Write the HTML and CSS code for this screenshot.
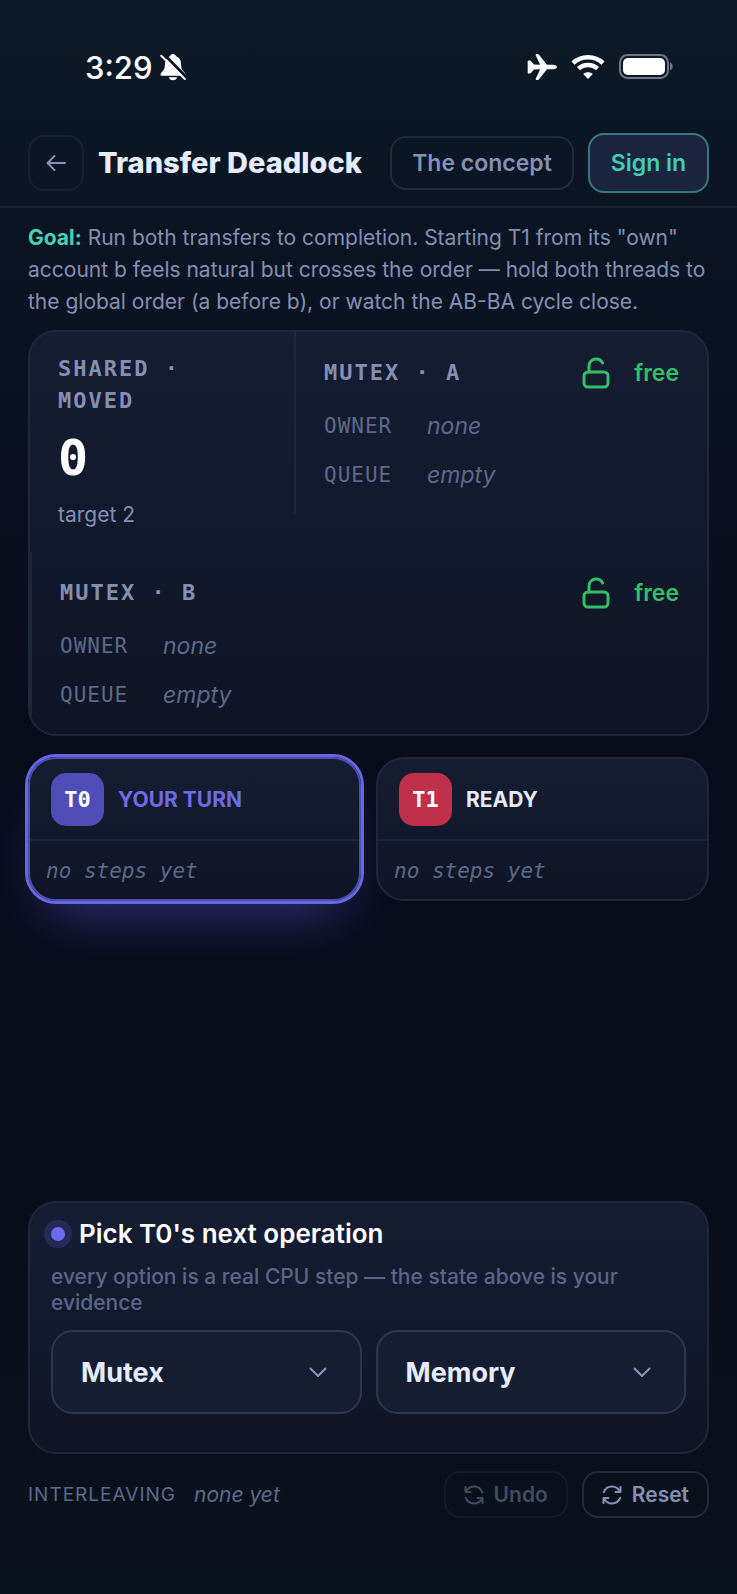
FILE: index.html
```html
<!DOCTYPE html>
<html lang="en">
<head>
    <meta charset="UTF-8">
    <meta name="viewport" content="width=device-width, initial-scale=1.0">
    <title>Transfer Deadlock</title>
    <link rel="stylesheet" href="styles.css">
</head>
<body>
    <div class="status-bar">
        <div class="status-left">
            <span class="time">3:29</span>
            <svg width="26" height="28" viewBox="0 0 26 28" aria-hidden="true">
                <path d="M13 1c-1.500 0-2.800 1-3.200 2.300C6.500 4.500 5 7.300 5 10.500c0 4-.6 6-2.600 8-1 1-1.900 2-1.900 3 0 .9.600 1.300 1.500 1.300h22c.9 0 1.500-.4 1.500-1.300 0-1-.9-2-1.900-3-2-2-2.600-4-2.600-8 0-3.200-1.500-6-4.800-7.200C15.800 2 14.500 1 13 1zM8.800 24.300c.5 1.800 2.200 2.900 4.200 2.900s3.700-1.100 4.200-2.900z" fill="#fff"/>
                <path d="M3.500 .8l23 23.500" stroke="#0b1725" stroke-width="3"/>
                <path d="M1.200 2.700l23.600 23.300" stroke="#fff" stroke-width="2" stroke-linecap="round"/>
            </svg>
        </div>
        <div class="status-right">
            <svg width="30" height="28" viewBox="0 0 30 28" aria-hidden="true">
                <path d="M1.300 7.500h1.500c.5 0 .8.200 1.100.5l3 3.500 6.300.2-4.400-9.300c-.4-.8 0-1.400.8-1.400h1c.5 0 .9.200 1.200.6l8.200 10.200h6.300c1.900 0 3.700 1 3.700 2.200s-1.800 2.200-3.700 2.200H20l-8.200 10.200c-.3.400-.7.600-1.200.6h-1c-.8 0-1.200-.6-.8-1.400l4.400-9.300-6.300.2-3 3.500c-.3.300-.6.500-1.100.5H1.300c-.4 0-.6-.3-.6-.7V8.200c0-.4.200-.7.600-.7z" fill="#fff"/>
            </svg>
            <svg width="34" height="26" viewBox="0 0 34 26" aria-hidden="true">
                <path d="M2 9.200C10.200 1.300 23.800 1.300 32 9.200M7.500 14.700c5.300-5 13.700-5 19 0" stroke="#fff" stroke-width="4.400" fill="none"/>
                <path d="M17 25l-4.800-5c2.700-2.500 6.900-2.500 9.600 0z" fill="#fff"/>
            </svg>
            <svg width="54" height="26" viewBox="0 0 54 26" aria-hidden="true">
                <rect x="1" y="1" width="48" height="23" rx="7.500" fill="none" stroke="#6d7681" stroke-width="2"/>
                <rect x="4" y="4" width="42" height="17" rx="5" fill="#fff"/>
                <path d="M51 8.500c1.800.6 2.700 2.200 2.700 4s-.9 3.400-2.700 4z" fill="#6d7681"/>
            </svg>
        </div>
    </div>

    <header class="top-bar">
        <button class="back" aria-label="Back">
            <svg width="20" height="18" viewBox="0 0 20 18"><path d="M19 9H1.500M8.500 2L1.500 9l7 7" /></svg>
        </button>
        <h1>Transfer Deadlock</h1>
        <button class="concept">The concept</button>
        <button class="sign-in">Sign in</button>
    </header>

    <main>
        <p class="goal"><strong>Goal:</strong> Run both transfers to completion. Starting T1 from its "own" account b feels natural but crosses the order — hold both threads to the global order (a before b), or watch the AB-BA cycle close.</p>

        <section class="card state">
            <div class="shared">
                <h2 class="label">SHARED · MOVED</h2>
                <div class="value">0</div>
                <div class="target">target 2</div>
            </div>
            <div class="mutex">
                <div class="mutex-head">
                    <h2 class="label">MUTEX · A</h2>
                    <svg class="lock" width="28" height="32" viewBox="0 0 28 32"><rect x="2" y="15" width="24" height="15" rx="4"/><path d="M7 15V9c0-4 3-7 7-7 3 0 5.500 1.500 6.500 4"/></svg>
                    <span class="free">free</span>
                </div>
                <div class="row"><span class="key">OWNER</span><em>none</em></div>
                <div class="row"><span class="key">QUEUE</span><em>empty</em></div>
            </div>
            <div class="mutex wide">
                <div class="mutex-head">
                    <h2 class="label">MUTEX · B</h2>
                    <svg class="lock" width="28" height="32" viewBox="0 0 28 32"><rect x="2" y="15" width="24" height="15" rx="4"/><path d="M7 15V9c0-4 3-7 7-7 3 0 5.500 1.500 6.500 4"/></svg>
                    <span class="free">free</span>
                </div>
                <div class="row"><span class="key">OWNER</span><em>none</em></div>
                <div class="row"><span class="key">QUEUE</span><em>empty</em></div>
            </div>
        </section>

        <section class="threads">
            <div class="card thread active">
                <div class="thread-head"><span class="badge t0">T0</span><span class="turn">YOUR TURN</span></div>
                <div class="steps">no steps yet</div>
            </div>
            <div class="card thread">
                <div class="thread-head"><span class="badge t1">T1</span><span class="turn">READY</span></div>
                <div class="steps">no steps yet</div>
            </div>
        </section>

        <section class="card picker">
            <h2><span class="dot"></span>Pick T0's next operation</h2>
            <p>every option is a real CPU step — the state above is your evidence</p>
            <div class="options">
                <button>Mutex <svg width="18" height="11" viewBox="0 0 18 11"><path d="M1.500 1.500L9 9l7.500-7.500"/></svg></button>
                <button>Memory <svg width="18" height="11" viewBox="0 0 18 11"><path d="M1.500 1.500L9 9l7.500-7.500"/></svg></button>
            </div>
        </section>
    </main>

    <footer>
        <span class="inter">INTERLEAVING</span>
        <em>none yet</em>
        <div class="actions">
            <button disabled>
                <svg width="20" height="20" viewBox="0 0 20 20"><path d="M1.500 2v5h5M1.800 7C3.500 3.500 6.500 1.500 10 1.500c3.800 0 7 2.300 8.300 5.800M18.500 18v-5h-5M18.200 13c-1.700 3.500-4.700 5.500-8.200 5.500-3.800 0-7-2.300-8.300-5.800"/></svg>
                Undo
            </button>
            <button>
                <svg width="20" height="20" viewBox="0 0 20 20"><path d="M18.500 2v5h-5M18.200 7C16.500 3.500 13.500 1.500 10 1.500c-3.800 0-7 2.300-8.300 5.800M1.500 18v-5h5M1.800 13c1.700 3.500 4.700 5.500 8.200 5.500 3.800 0 7-2.300 8.300-5.800"/></svg>
                Reset
            </button>
        </div>
    </footer>
</body>
</html>
```
FILE: styles.css
```css
* {
    box-sizing: border-box;
}
body {
    margin: 0;
    min-height: 100vh;
    display: flex;
    flex-direction: column;
    font-family: Inter, sans-serif;
    font-size: 22px;
    color: #8490b2;
    background: linear-gradient(#0c1a27 0, #0b1423 14%, #090d1b 45%, #090d1a 70%, #0a121d 100%);
}
h1, h2, p {
    margin: 0;
}
button {
    font-family: inherit;
    font-size: 23px;
    font-weight: 600;
    color: #8491b4;
    background: none;
    border: 2px solid #222b3b;
    border-radius: 16px;
    padding: 0;
}
svg {
    flex: none;
}
button svg, .lock {
    fill: none;
    stroke: currentColor;
    stroke-width: 2;
    stroke-linecap: round;
    stroke-linejoin: round;
}

/* status bar */
.status-bar {
    display: flex;
    justify-content: space-between;
    padding: 47px 64px 0 85px;
    height: 132px;
}
.status-left, .status-right {
    display: flex;
    align-items: center;
    height: 40px;
    color: #fff;
}
.status-left {
    gap: 8px;
}
.status-right {
    gap: 14px;
}
.time {
    font-size: 31px;
    font-weight: 500;
}

/* header */
.top-bar {
    display: flex;
    align-items: center;
    height: 76px;
    padding: 0 28px 13px;
    border-bottom: 2px solid #172130;
}
.top-bar h1 {
    flex: 1;
    margin-left: 14px;
    font-size: 29px;
    font-weight: 800;
    white-space: nowrap;
    color: #e6ecfb;
}
.back {
    display: flex;
    align-items: center;
    justify-content: center;
    width: 56px;
    height: 56px;
    border-color: #172031;
}
.concept {
    width: 184px;
    height: 54px;
    margin-right: 14px;
}
.sign-in {
    width: 121px;
    height: 60px;
    color: #3fcdb6;
    background: #1b2540;
    border-color: #347982;
}

main {
    flex: 1;
    display: flex;
    flex-direction: column;
    padding: 14px 28px 0;
}
.goal {
    font-size: 21px;
    line-height: 32px;
    margin-bottom: 12px;
}
.goal strong {
    color: #46d3b5;
}
.card {
    border: 2px solid #1f283a;
    border-radius: 28px;
    background: linear-gradient(#151d33, #0f1525);
}

/* shared value and mutexes */
.state {
    display: flex;
    flex-wrap: wrap;
    align-items: flex-start;
    overflow: hidden;
}
.label {
    font-family: "DejaVu Sans Mono", monospace;
    font-size: 22px;
    line-height: 32px;
    letter-spacing: 2px;
}
.shared {
    width: 39%;
    padding: 21px 28px;
}
.value {
    margin: 12px 0;
    font-family: "DejaVu Sans Mono", monospace;
    font-size: 50px;
    line-height: 58px;
    font-weight: 700;
    color: #fff;
}
.target {
    font-size: 21px;
    line-height: 32px;
}
.mutex {
    flex: 1;
    display: flex;
    flex-direction: column;
    gap: 15px;
    padding: 23px 28px 22px;
    border-left: 2px solid #1f283a;
}
.wide {
    flex-basis: 100%;
}
.mutex-head {
    display: flex;
    align-items: center;
    height: 36px;
    margin-bottom: 3px;
}
.lock {
    margin-left: auto;
    stroke-width: 3;
    color: #30c065;
}
.free {
    margin-left: 24px;
    font-size: 23px;
    font-weight: 600;
    color: #30c065;
}
.row {
    display: flex;
    line-height: 34px;
    color: #5d6989;
}
.key {
    width: 103px;
    font-family: "DejaVu Sans Mono", monospace;
    font-size: 21px;
    letter-spacing: 1px;
}
.row em {
    font-size: 23px;
}

/* threads */
.threads {
    display: grid;
    grid-template-columns: 1fr 1fr;
    gap: 15px;
    margin-top: 21px;
}
.active {
    border-color: #4c4eb0;
    box-shadow: 0 0 0 3px #6667e2, 0 32px 56px -20px #5b4fe080;
}
.thread-head {
    display: flex;
    align-items: center;
    gap: 14px;
    padding: 14px 21px 13px;
    border-bottom: 2px solid #1c2537;
}
.badge {
    width: 53px;
    height: 53px;
    border-radius: 15px;
    font-family: "DejaVu Sans Mono", monospace;
    line-height: 53px;
    font-weight: 700;
    text-align: center;
    color: #fff;
}
.t0 {
    background: #4e4db8;
}
.t1 {
    background: #c03049;
}
.turn {
    font-size: 21px;
    font-weight: 700;
    color: #e6ecfb;
}
.active .turn {
    color: #6d6ce4;
}
.steps {
    padding: 14px 16px 12px;
    font-family: "DejaVu Sans Mono", monospace;
    font-size: 21px;
    line-height: 32px;
    font-style: italic;
    color: #5d6989;
}

/* operation picker */
.picker {
    margin-top: auto;
    padding: 15px 21px 38px;
}
.picker h2 {
    display: flex;
    align-items: center;
    gap: 14px;
    font-size: 26px;
    line-height: 32px;
    font-weight: 600;
    color: #fff;
}
.dot {
    width: 14px;
    height: 14px;
    border-radius: 50%;
    background: #6a6bf0;
    box-shadow: 0 0 0 7px #6a6bf033;
}
.picker p {
    margin: 14px 0;
    font-size: 21px;
    font-weight: 500;
    line-height: 26px;
    color: #5a6688;
}
.options {
    display: grid;
    grid-template-columns: 1fr 1fr;
    gap: 14px;
}
.options button {
    display: flex;
    align-items: center;
    justify-content: space-between;
    height: 84px;
    padding: 0 33px 0 28px;
    border-color: #2e374a;
    border-radius: 22px;
    background: #151d33;
    font-size: 27px;
    font-weight: 700;
    color: #e6ecfb;
}
.options svg {
    color: #8c97b8;
}

footer {
    display: flex;
    align-items: center;
    padding: 17px 28px 76px;
    font-size: 21px;
    color: #5d6989;
}
.inter {
    margin-right: 18px;
    font-size: 19px;
    letter-spacing: 1px;
}
.actions {
    display: flex;
    gap: 14px;
    margin-left: auto;
}
.actions button {
    display: flex;
    align-items: center;
    gap: 10px;
    height: 47px;
    padding: 0 18px;
    font-size: 21px;
}
.actions button:disabled {
    opacity: 0.45;
}
```
